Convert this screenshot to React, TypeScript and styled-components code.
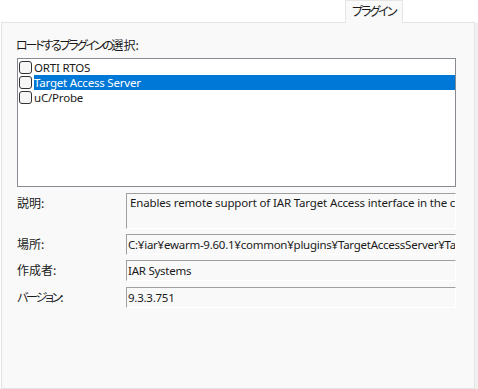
import React from "react";
import styled, { createGlobalStyle } from "styled-components";

const Global = createGlobalStyle`
  html, body { margin: 0; padding: 0; background: #ffffff; }
  body { width: 478px; height: 389px; overflow: hidden; }
  * { box-sizing: border-box; }
`;

const Root = styled.div`
  width: 478px;
  height: 389px;
  display: flex;
  flex-direction: column;
  padding-left: 1px;
  font-family: "Noto Sans", "Noto Sans CJK JP", sans-serif;
  color: #1a1a1a;
`;

const TabBar = styled.div`
  height: 22px;
  display: flex;
  padding-left: 344px;
  position: relative;
  z-index: 1;
`;

const Tab = styled.div`
  width: 58px;
  height: 23px;
  background: #f9f9f9;
  border: 1px solid #e6e6e6;
  border-bottom: none;
  font-family: "Noto Sans CJK JP", sans-serif;
  font-size: 12px;
  line-height: 20px;
  padding-left: 6px;
  white-space: nowrap;
`;

const Kana = styled.span<{ $ls?: number }>`
  font-feature-settings: "palt";
  letter-spacing: ${(p) => (p.$ls ?? -2.2)}px;
`;

const Body = styled.div`
  flex: 1;
  display: flex;
`;

const Panel = styled.div`
  width: 474px;
  height: 367px;
  background: #f9f9f9;
  border: 1px solid #e3e3e3;
  padding: 14px 0 0 14px;
  display: flex;
  flex-direction: column;
`;

const Strip = styled.div`
  flex: 1;
  background: #f0f0f0;
  margin-top: 1px;
`;

const Caption = styled.div`
  font-family: "Noto Sans CJK JP", sans-serif;
  font-size: 12px;
  line-height: 16px;
  height: 21px;
  white-space: nowrap;
`;

const ListBox = styled.div`
  margin-left: 1px;
  width: 439px;
  height: 129px;
  background: #ffffff;
  border: 1px solid #868a91;
  padding-top: 1px;
  display: flex;
  flex-direction: column;
`;

const Row = styled.div`
  height: 15px;
  display: flex;
  align-items: center;
  padding-left: 1px;
`;

const Check = styled.span`
  width: 13px;
  height: 13px;
  border: 1px solid #333333;
  border-radius: 3px;
  background: #f6f6f6;
  flex: none;
`;

const RowText = styled.span<{ $selected?: boolean }>`
  flex: 1;
  height: 15px;
  margin-left: 2px;
  font-size: 11.5px;
  letter-spacing: -0.2px;
  line-height: 15px;
  background: ${(p) => (p.$selected ? "#0078d7" : "transparent")};
  color: ${(p) => (p.$selected ? "#ffffff" : "#1a1a1a")};
  white-space: nowrap;
`;

const Fields = styled.div`
  margin-top: 6px;
  margin-left: 1px;
  display: grid;
  grid-template-columns: 109px 330px;
`;

const Label = styled.div<{ $top: number }>`
  margin-top: ${(p) => p.$top}px;
  font-family: "Noto Sans CJK JP", sans-serif;
  font-size: 12px;
  line-height: 16px;
  padding-top: 2px;
  white-space: nowrap;
`;

const Field = styled.div<{ $top: number; $h: number; $multi?: boolean }>`
  margin-top: ${(p) => p.$top}px;
  height: ${(p) => p.$h}px;
  border-top: 1px solid #a0a0a0;
  border-left: 1px solid #a0a0a0;
  border-right: 1px solid #ffffff;
  border-bottom: 1px solid #ffffff;
  padding: ${(p) => (p.$multi ? "1px 0 0 3px" : "0 0 0 1px")};
  font-size: 11.5px;
  letter-spacing: ${(p) => (p.$multi ? "-0.15px" : "-0.25px")};
  line-height: ${(p) => (p.$multi ? "16px" : `${p.$h - 2}px`)};
  white-space: nowrap;
  overflow: hidden;
`;

export default function App() {
  const plugins = ["ORTI RTOS", "Target Access Server", "uC/Probe"];
  return (
    <Root>
      <Global />
      <TabBar>
        <Tab>
          <Kana $ls={-2}>プラグイン</Kana>
        </Tab>
      </TabBar>
      <Body>
        <Panel>
          <Caption>
            <Kana>ロードするプラグインの</Kana>選択:
          </Caption>
          <ListBox>
            {plugins.map((p, i) => (
              <Row key={p}>
                <Check />
                <RowText $selected={i === 1}>{p}</RowText>
              </Row>
            ))}
          </ListBox>
          <Fields>
            <Label $top={0}>説明:</Label>
            <Field $top={0} $h={36} $multi>
              Enables remote support of IAR Target Access interface in the current
            </Field>
            <Label $top={5}>場所:</Label>
            <Field $top={5} $h={21}>
              C:¥iar¥ewarm-9.60.1¥common¥plugins¥TargetAccessServer¥TargetAccessServer.dll
            </Field>
            <Label $top={5}>作成者:</Label>
            <Field $top={5} $h={21}>
              IAR Systems
            </Field>
            <Label $top={6}>
              <Kana>バージョン</Kana>:
            </Label>
            <Field $top={6} $h={21}>
              9.3.3.751
            </Field>
          </Fields>
        </Panel>
        <Strip />
      </Body>
    </Root>
  );
}
